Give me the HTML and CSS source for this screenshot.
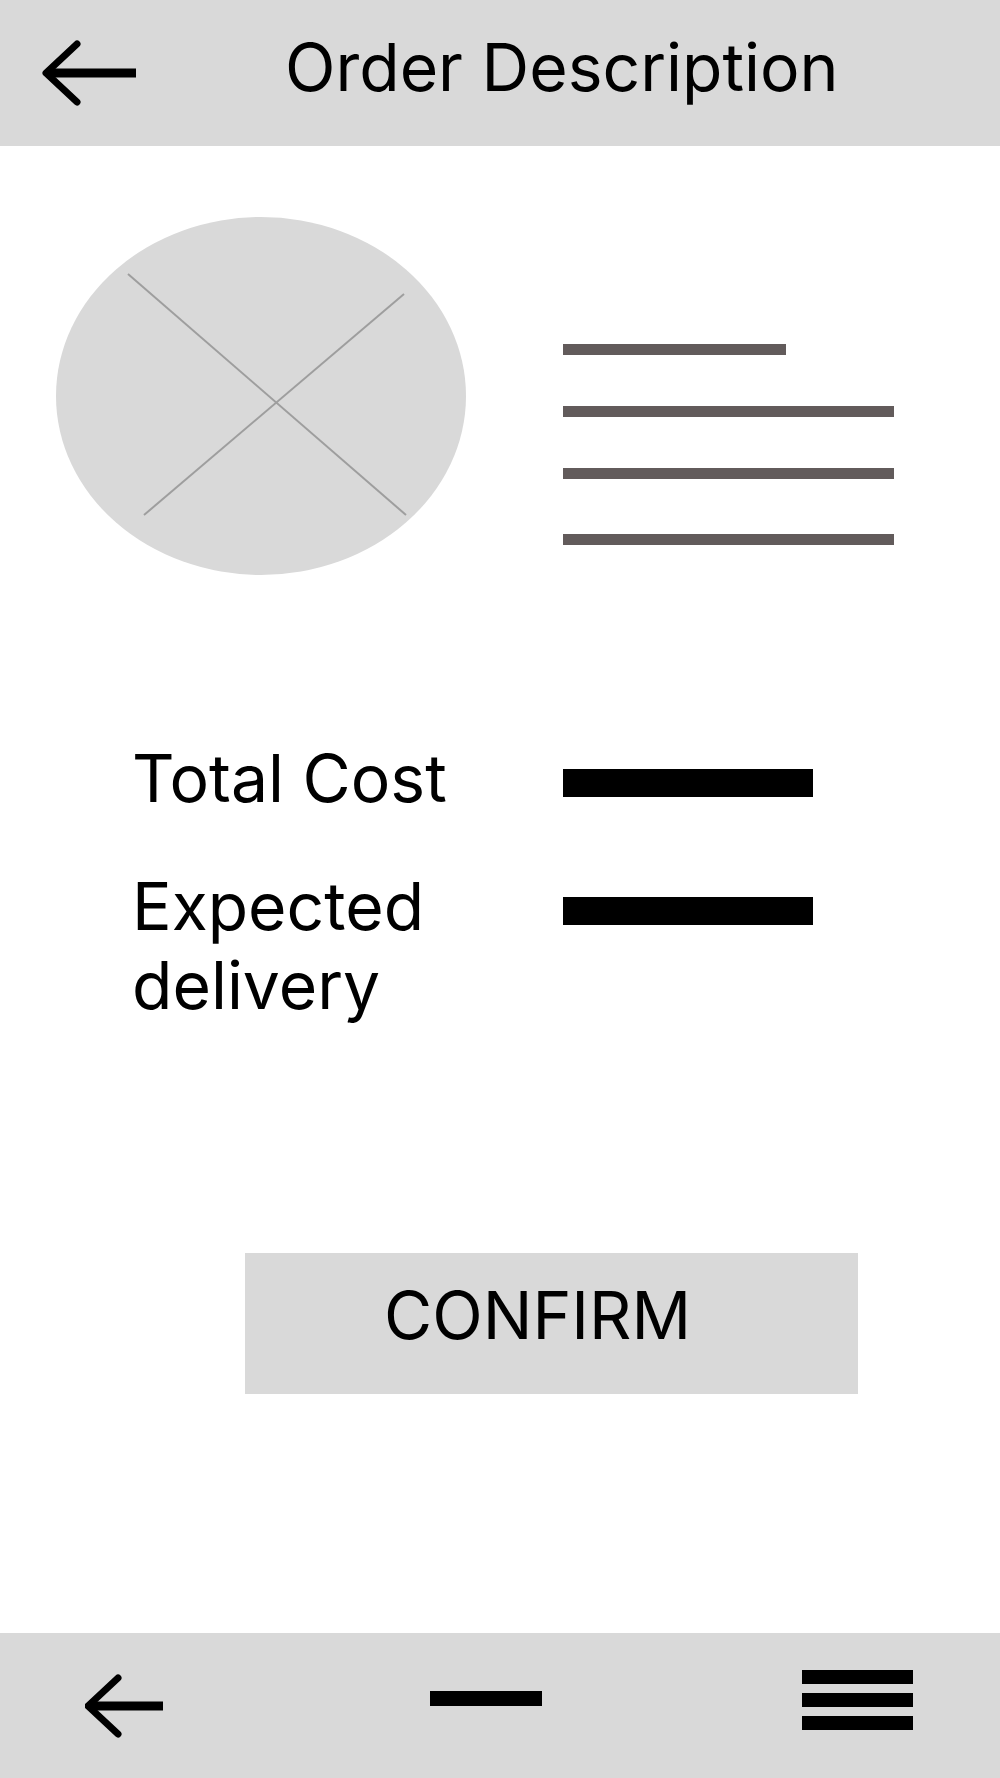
FILE: index.html
```html
<!DOCTYPE html>
<html lang="en">
<head>
    <meta charset="UTF-8">
    <meta name="viewport" content="width=device-width, initial-scale=1.0">
    <title>Order Description</title>
    <link rel="stylesheet" href="styles.css">
</head>
<body>

<header class="top-bar">
    <svg class="back-icon" width="96" height="66" viewBox="0 0 96 66">
        <line x1="5" y1="33" x2="94" y2="33" stroke="#000" stroke-width="9"/>
        <polyline points="35,4 4,33 35,62" fill="none" stroke="#000" stroke-width="7" stroke-linecap="round" stroke-linejoin="round"/>
    </svg>
    <h1>Order Description</h1>
</header>

<main class="content">
    <section class="product">
        <svg class="product-image" width="410" height="358" viewBox="0 0 410 358">
            <ellipse cx="205" cy="179" rx="205" ry="179" fill="#d9d9d9"/>
            <line x1="72" y1="57" x2="350" y2="298" stroke="#9e9e9e" stroke-width="2"/>
            <line x1="88" y1="298" x2="348" y2="77" stroke="#9e9e9e" stroke-width="2"/>
        </svg>
        <div class="product-lines">
            <span class="text-line short"></span>
            <span class="text-line"></span>
            <span class="text-line"></span>
            <span class="text-line"></span>
        </div>
    </section>

    <section class="summary">
        <div class="summary-label">Total Cost</div>
        <div class="summary-value"></div>
        <div class="summary-label">Expected<br>delivery</div>
        <div class="summary-value"></div>
    </section>

    <button class="confirm-btn">CONFIRM</button>
</main>

<footer class="bottom-bar">
    <svg class="nav-icon" width="80" height="64" viewBox="0 0 80 64">
        <line x1="4" y1="32" x2="78" y2="32" stroke="#000" stroke-width="9"/>
        <polyline points="33,4 3,32 33,60" fill="none" stroke="#000" stroke-width="7" stroke-linecap="round" stroke-linejoin="round"/>
    </svg>
    <span class="nav-minus"></span>
    <span class="nav-menu">
        <span></span>
        <span></span>
        <span></span>
    </span>
</footer>

</body>
</html>
```

FILE: styles.css
```css
body {
    font-family: Inter, "Noto Sans", sans-serif;
    margin: 0;
    padding: 0;
    width: 1000px;
    height: 1778px;
    display: flex;
    flex-direction: column;
    background-color: #fff;
    color: #000;
}
.top-bar {
    background-color: #d9d9d9;
    height: 146px;
    display: flex;
    align-items: center;
    padding-left: 42px;
    box-sizing: border-box;
}
.top-bar h1 {
    font-weight: 400;
    font-size: 66px;
    line-height: 79px;
    margin: 0 0 11px 147px;
}
.content {
    flex: 1;
    display: flex;
    flex-direction: column;
}
.product {
    display: flex;
    margin-top: 71px;
    padding-left: 56px;
}
.product-lines {
    display: flex;
    flex-direction: column;
    margin-left: 97px;
    padding-top: 127px;
}
.text-line {
    display: block;
    width: 331px;
    height: 11px;
    margin-top: 51px;
    background-color: #625b5b;
}
.text-line.short {
    width: 223px;
    margin-top: 0;
}
.text-line:last-child {
    margin-top: 55px;
}
.summary {
    display: grid;
    grid-template-columns: 431px 250px;
    row-gap: 49px;
    margin-top: 164px;
    padding-left: 132px;
}
.summary-label {
    font-size: 66px;
    line-height: 79px;
}
.summary-value {
    height: 28px;
    margin-top: 30px;
    background-color: #000;
}
.confirm-btn {
    align-self: flex-start;
    margin: 228px 0 0 245px;
    width: 613px;
    height: 141px;
    border: none;
    background-color: #d9d9d9;
    font-family: Inter, "Noto Sans", sans-serif;
    font-size: 66px;
    line-height: 79px;
    color: #000;
    text-align: left;
    padding: 0 0 17px 139px;
}
.bottom-bar {
    background-color: #d9d9d9;
    height: 145px;
    display: flex;
    align-items: center;
    justify-content: space-between;
    padding: 0 87px 0 85px;
}
.nav-minus {
    width: 112px;
    height: 15px;
    background-color: #000;
    margin: 0 0 14px 4px;
}
.nav-menu {
    display: flex;
    flex-direction: column;
    gap: 9px;
    width: 111px;
    margin-bottom: 12px;
}
.nav-menu span {
    display: block;
    height: 14px;
    background-color: #000;
}
```
